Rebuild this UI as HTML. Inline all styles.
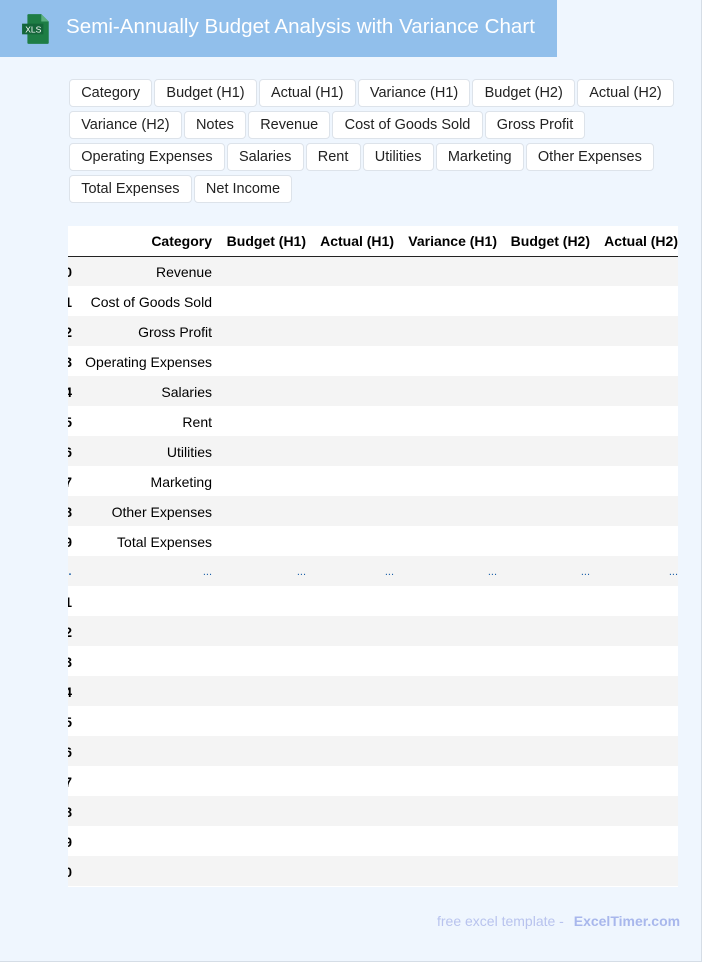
<!DOCTYPE html>
<html><head><meta charset="utf-8"><style>
*{box-sizing:border-box;margin:0;padding:0}
body{width:702px;height:962px;background:#eff6fe;font-family:"Liberation Sans",Arial,sans-serif;position:relative;overflow:hidden;border-right:1px solid #d5dde6;border-bottom:1px solid #d5dde6}
.hdr{position:absolute;left:0;top:0;width:557px;height:57px;background:#91bfeb}
.hdr .t{position:absolute;left:66px;top:15px;color:#fff;font-size:20.6px}
.ic{position:absolute;left:22px;top:13px}
.chips{position:absolute;left:69px;top:79px;width:612px;display:flex;flex-wrap:wrap;gap:4px 2px}
.chip{height:28px;line-height:27px;padding:0 11.2px;background:#fff;border:1px solid #dde3ea;border-radius:4px;font-size:14.5px;color:#222}
.tw{position:absolute;left:68px;top:226px;width:610px;height:661px;overflow:hidden;background:#fff}
table{border-collapse:collapse;position:absolute;left:-40px;top:0;font-size:14px;table-layout:fixed;width:650px}
td,th{height:30px;padding:0;text-align:right;white-space:nowrap;overflow:hidden}
td{padding-top:2px}
th{font-weight:bold;border-bottom:1px solid #222;font-size:14px}
tr.g td{background:#f4f4f4}
.i{font-weight:bold;text-align:right}
.dots td{color:#1a5fa8;font-size:11px}
.ft{position:absolute;left:437px;top:913px;font-size:14px;color:#b8c3ee}
.ft b{color:#a8b7ec;margin-left:6px}
</style></head><body>
<div class="hdr">
<svg class="ic" width="30" height="32" viewBox="0 0 28 30"><path d="M6 1h12l7 7v20a1 1 0 0 1-1 1H6a1 1 0 0 1-1-1V2a1 1 0 0 1 1-1z" fill="#1e7d45"/><path d="M18 1l7 7h-7z" fill="#5bb07f"/><rect x="0" y="10" width="20" height="10" fill="#14663a"/><text x="3" y="18.5" font-size="8" fill="#fff" font-family="Liberation Sans">XLS</text></svg>
<div class="t">Semi-Annually Budget Analysis with Variance Chart</div></div>
<div class="chips">
<span class="chip">Category</span><span class="chip">Budget (H1)</span><span class="chip">Actual (H1)</span><span class="chip">Variance (H1)</span><span class="chip">Budget (H2)</span><span class="chip">Actual (H2)</span>
<span class="chip">Variance (H2)</span><span class="chip">Notes</span><span class="chip">Revenue</span><span class="chip">Cost of Goods Sold</span><span class="chip">Gross Profit</span>
<span class="chip">Operating Expenses</span><span class="chip">Salaries</span><span class="chip">Rent</span><span class="chip">Utilities</span><span class="chip">Marketing</span><span class="chip">Other Expenses</span>
<span class="chip">Total Expenses</span><span class="chip">Net Income</span>
</div>
<div class="tw"><table>
<colgroup><col style="width:44px"><col style="width:140px"><col style="width:94px"><col style="width:88px"><col style="width:103px"><col style="width:93px"><col style="width:88px"></colgroup>
<tr><th></th><th>Category</th><th>Budget (H1)</th><th>Actual (H1)</th><th>Variance (H1)</th><th>Budget (H2)</th><th>Actual (H2)</th></tr>
<tr class="g"><td class="i">0</td><td>Revenue</td><td></td><td></td><td></td><td></td><td></td></tr>
<tr><td class="i">1</td><td>Cost of Goods Sold</td><td></td><td></td><td></td><td></td><td></td></tr>
<tr class="g"><td class="i">2</td><td>Gross Profit</td><td></td><td></td><td></td><td></td><td></td></tr>
<tr><td class="i">3</td><td>Operating Expenses</td><td></td><td></td><td></td><td></td><td></td></tr>
<tr class="g"><td class="i">4</td><td>Salaries</td><td></td><td></td><td></td><td></td><td></td></tr>
<tr><td class="i">5</td><td>Rent</td><td></td><td></td><td></td><td></td><td></td></tr>
<tr class="g"><td class="i">6</td><td>Utilities</td><td></td><td></td><td></td><td></td><td></td></tr>
<tr><td class="i">7</td><td>Marketing</td><td></td><td></td><td></td><td></td><td></td></tr>
<tr class="g"><td class="i">8</td><td>Other Expenses</td><td></td><td></td><td></td><td></td><td></td></tr>
<tr><td class="i">9</td><td>Total Expenses</td><td></td><td></td><td></td><td></td><td></td></tr>
<tr class="g dots"><td class="i">…</td><td>...</td><td>...</td><td>...</td><td>...</td><td>...</td><td>...</td></tr>
<tr><td class="i">11</td><td></td><td></td><td></td><td></td><td></td><td></td></tr>
<tr class="g"><td class="i">12</td><td></td><td></td><td></td><td></td><td></td><td></td></tr>
<tr><td class="i">13</td><td></td><td></td><td></td><td></td><td></td><td></td></tr>
<tr class="g"><td class="i">14</td><td></td><td></td><td></td><td></td><td></td><td></td></tr>
<tr><td class="i">15</td><td></td><td></td><td></td><td></td><td></td><td></td></tr>
<tr class="g"><td class="i">16</td><td></td><td></td><td></td><td></td><td></td><td></td></tr>
<tr><td class="i">17</td><td></td><td></td><td></td><td></td><td></td><td></td></tr>
<tr class="g"><td class="i">18</td><td></td><td></td><td></td><td></td><td></td><td></td></tr>
<tr><td class="i">19</td><td></td><td></td><td></td><td></td><td></td><td></td></tr>
<tr class="g"><td class="i">20</td><td></td><td></td><td></td><td></td><td></td><td></td></tr>
</table></div>
<div class="ft">free excel template - <b>ExcelTimer.com</b></div>
</body></html>
